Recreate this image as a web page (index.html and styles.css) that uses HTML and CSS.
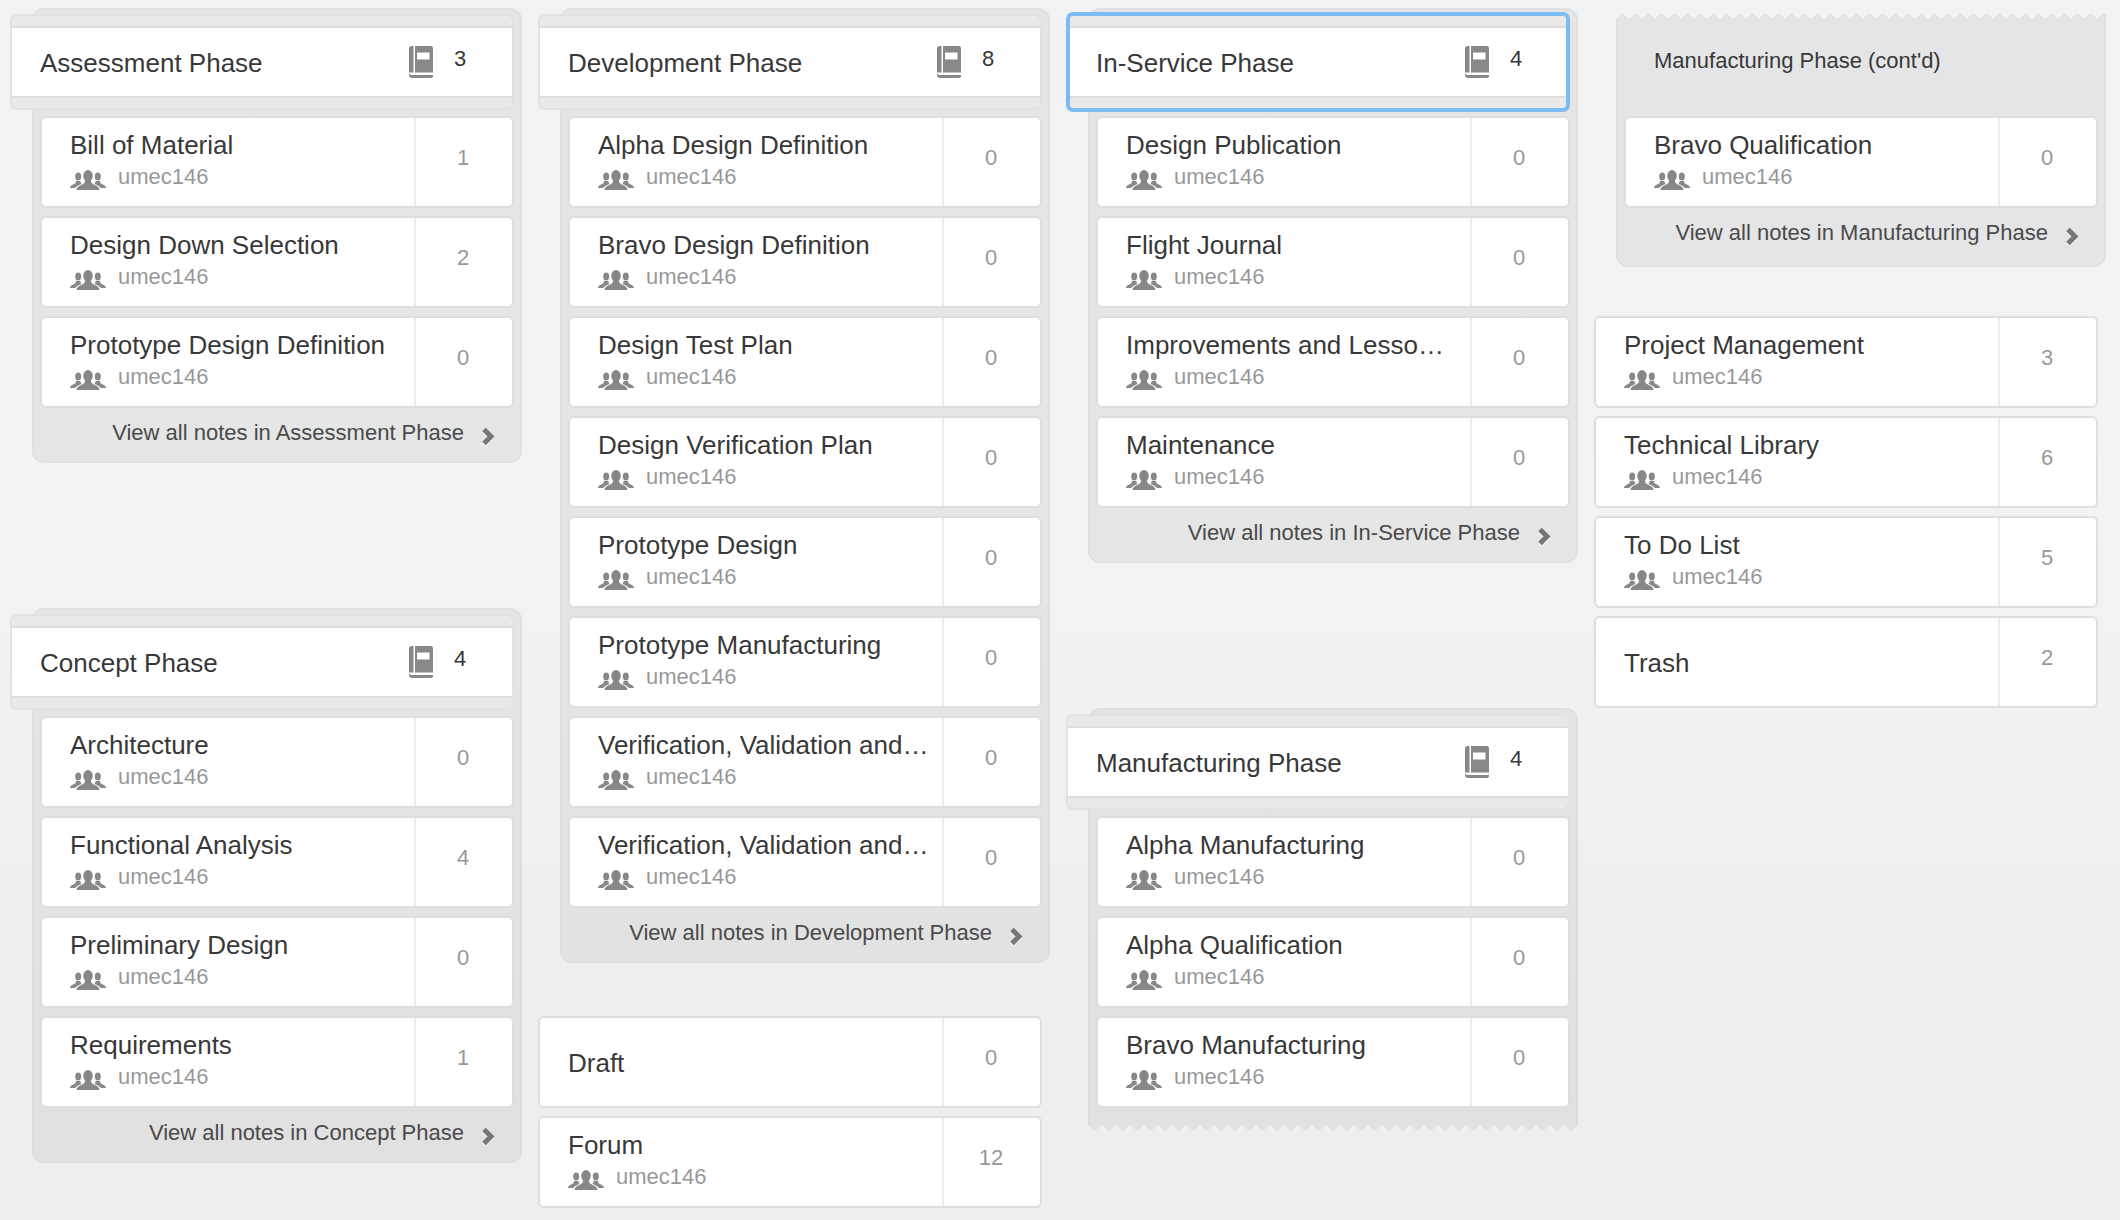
FILE: index.html
```html
<!DOCTYPE html>
<html lang="en">
<head>
<meta charset="utf-8">
<title>Notebooks</title>
<link rel="stylesheet" href="styles.css">
</head>
<body>
<svg class="sprite" aria-hidden="true">
  <symbol id="i-users" viewBox="0 0 36 20">
    <ellipse cx="8.200" cy="6.500" rx="3" ry="4"/>
    <path d="M0 18c0-2.800 3.800-3.600 5.800-5v-2h4.800v2l1.200.7c-2.800 1.400-5.600 2.300-6.600 4.300z"/>
    <ellipse cx="27.800" cy="6.500" rx="3" ry="4"/>
    <path d="M36 18c0-2.800-3.800-3.600-5.800-5v-2h-4.800v2l-1.200.7c2.800 1.400 5.600 2.300 6.600 4.300z"/>
    <ellipse cx="18" cy="5.800" rx="4.800" ry="5.800"/>
    <path d="M6.500 20c0-4 6-5 8.300-7.500v-2h6.400v2c2.300 2.500 8.300 3.500 8.300 7.500z"/>
  </symbol>
  <symbol id="i-book" viewBox="0 0 24 32">
    <path d="M0 2.500A2.500 2.500 0 0 1 2.500 0H4.500V26.500H0z"/>
    <path d="M6 0h15.500A2.500 2.500 0 0 1 24 2.500V26.500H6zM8 6.500V13.500H20.500V6.500z" fill-rule="evenodd"/>
    <path d="M0 26.500c0 1.400 1 2.500 2.500 2.500H24v1c0 1.200-.8 2-2 2H3c-1.800 0-3-1.200-3-3z"/>
  </symbol>
  <symbol id="i-chevron" viewBox="0 0 13 19">
    <path d="M2 2.500 9 9.500 2 16.500" fill="none" stroke="currentColor" stroke-width="5"/>
  </symbol>
</svg>

<main class="board">

  <section class="column">
    <div class="stack">
      <header class="stack-head">
        <div class="stack-head-inner">
          <h2 class="stack-title">Assessment Phase</h2>
          <svg class="icon-book"><use href="#i-book"/></svg>
          <span class="stack-count">3</span>
        </div>
      </header>
      <a class="row"><div class="row-main"><div class="row-title">Bill of Material</div><div class="row-owner"><svg class="icon-users"><use href="#i-users"/></svg>umec146</div></div><div class="row-count">1</div></a>
      <a class="row"><div class="row-main"><div class="row-title">Design Down Selection</div><div class="row-owner"><svg class="icon-users"><use href="#i-users"/></svg>umec146</div></div><div class="row-count">2</div></a>
      <a class="row"><div class="row-main"><div class="row-title">Prototype Design Definition</div><div class="row-owner"><svg class="icon-users"><use href="#i-users"/></svg>umec146</div></div><div class="row-count">0</div></a>
      <a class="stack-foot">View all notes in Assessment Phase<svg class="icon-chevron"><use href="#i-chevron"/></svg></a>
    </div>

    <div class="stack stack-spaced">
      <header class="stack-head">
        <div class="stack-head-inner">
          <h2 class="stack-title">Concept Phase</h2>
          <svg class="icon-book"><use href="#i-book"/></svg>
          <span class="stack-count">4</span>
        </div>
      </header>
      <a class="row"><div class="row-main"><div class="row-title">Architecture</div><div class="row-owner"><svg class="icon-users"><use href="#i-users"/></svg>umec146</div></div><div class="row-count">0</div></a>
      <a class="row"><div class="row-main"><div class="row-title">Functional Analysis</div><div class="row-owner"><svg class="icon-users"><use href="#i-users"/></svg>umec146</div></div><div class="row-count">4</div></a>
      <a class="row"><div class="row-main"><div class="row-title">Preliminary Design</div><div class="row-owner"><svg class="icon-users"><use href="#i-users"/></svg>umec146</div></div><div class="row-count">0</div></a>
      <a class="row"><div class="row-main"><div class="row-title">Requirements</div><div class="row-owner"><svg class="icon-users"><use href="#i-users"/></svg>umec146</div></div><div class="row-count">1</div></a>
      <a class="stack-foot">View all notes in Concept Phase<svg class="icon-chevron"><use href="#i-chevron"/></svg></a>
    </div>
  </section>

  <section class="column">
    <div class="stack">
      <header class="stack-head">
        <div class="stack-head-inner">
          <h2 class="stack-title">Development Phase</h2>
          <svg class="icon-book"><use href="#i-book"/></svg>
          <span class="stack-count">8</span>
        </div>
      </header>
      <a class="row"><div class="row-main"><div class="row-title">Alpha Design Definition</div><div class="row-owner"><svg class="icon-users"><use href="#i-users"/></svg>umec146</div></div><div class="row-count">0</div></a>
      <a class="row"><div class="row-main"><div class="row-title">Bravo Design Definition</div><div class="row-owner"><svg class="icon-users"><use href="#i-users"/></svg>umec146</div></div><div class="row-count">0</div></a>
      <a class="row"><div class="row-main"><div class="row-title">Design Test Plan</div><div class="row-owner"><svg class="icon-users"><use href="#i-users"/></svg>umec146</div></div><div class="row-count">0</div></a>
      <a class="row"><div class="row-main"><div class="row-title">Design Verification Plan</div><div class="row-owner"><svg class="icon-users"><use href="#i-users"/></svg>umec146</div></div><div class="row-count">0</div></a>
      <a class="row"><div class="row-main"><div class="row-title">Prototype Design</div><div class="row-owner"><svg class="icon-users"><use href="#i-users"/></svg>umec146</div></div><div class="row-count">0</div></a>
      <a class="row"><div class="row-main"><div class="row-title">Prototype Manufacturing</div><div class="row-owner"><svg class="icon-users"><use href="#i-users"/></svg>umec146</div></div><div class="row-count">0</div></a>
      <a class="row"><div class="row-main"><div class="row-title">Verification, Validation and…</div><div class="row-owner"><svg class="icon-users"><use href="#i-users"/></svg>umec146</div></div><div class="row-count">0</div></a>
      <a class="row"><div class="row-main"><div class="row-title">Verification, Validation and…</div><div class="row-owner"><svg class="icon-users"><use href="#i-users"/></svg>umec146</div></div><div class="row-count">0</div></a>
      <a class="stack-foot">View all notes in Development Phase<svg class="icon-chevron"><use href="#i-chevron"/></svg></a>
    </div>
    <div class="loose loose-after-long">
      <a class="row row-plain"><div class="row-main"><div class="row-title">Draft</div></div><div class="row-count">0</div></a>
      <a class="row"><div class="row-main"><div class="row-title">Forum</div><div class="row-owner"><svg class="icon-users"><use href="#i-users"/></svg>umec146</div></div><div class="row-count">12</div></a>
    </div>
  </section>

  <section class="column">
    <div class="stack">
      <header class="stack-head stack-head-focus">
        <div class="stack-head-inner">
          <h2 class="stack-title">In-Service Phase</h2>
          <svg class="icon-book"><use href="#i-book"/></svg>
          <span class="stack-count">4</span>
        </div>
      </header>
      <a class="row"><div class="row-main"><div class="row-title">Design Publication</div><div class="row-owner"><svg class="icon-users"><use href="#i-users"/></svg>umec146</div></div><div class="row-count">0</div></a>
      <a class="row"><div class="row-main"><div class="row-title">Flight Journal</div><div class="row-owner"><svg class="icon-users"><use href="#i-users"/></svg>umec146</div></div><div class="row-count">0</div></a>
      <a class="row"><div class="row-main"><div class="row-title">Improvements and Lesso…</div><div class="row-owner"><svg class="icon-users"><use href="#i-users"/></svg>umec146</div></div><div class="row-count">0</div></a>
      <a class="row"><div class="row-main"><div class="row-title">Maintenance</div><div class="row-owner"><svg class="icon-users"><use href="#i-users"/></svg>umec146</div></div><div class="row-count">0</div></a>
      <a class="stack-foot">View all notes in In-Service Phase<svg class="icon-chevron"><use href="#i-chevron"/></svg></a>
    </div>

    <div class="stack stack-spaced stack-torn-bottom">
      <header class="stack-head">
        <div class="stack-head-inner">
          <h2 class="stack-title">Manufacturing Phase</h2>
          <svg class="icon-book"><use href="#i-book"/></svg>
          <span class="stack-count">4</span>
        </div>
      </header>
      <a class="row"><div class="row-main"><div class="row-title">Alpha Manufacturing</div><div class="row-owner"><svg class="icon-users"><use href="#i-users"/></svg>umec146</div></div><div class="row-count">0</div></a>
      <a class="row"><div class="row-main"><div class="row-title">Alpha Qualification</div><div class="row-owner"><svg class="icon-users"><use href="#i-users"/></svg>umec146</div></div><div class="row-count">0</div></a>
      <a class="row"><div class="row-main"><div class="row-title">Bravo Manufacturing</div><div class="row-owner"><svg class="icon-users"><use href="#i-users"/></svg>umec146</div></div><div class="row-count">0</div></a>
    </div>
  </section>

  <section class="column">
    <div class="stack stack-torn-top">
      <div class="stack-cont">Manufacturing Phase (cont'd)</div>
      <a class="row"><div class="row-main"><div class="row-title">Bravo Qualification</div><div class="row-owner"><svg class="icon-users"><use href="#i-users"/></svg>umec146</div></div><div class="row-count">0</div></a>
      <a class="stack-foot stack-foot-tall">View all notes in Manufacturing Phase<svg class="icon-chevron"><use href="#i-chevron"/></svg></a>
    </div>
    <div class="loose loose-after-short">
      <a class="row"><div class="row-main"><div class="row-title">Project Management</div><div class="row-owner"><svg class="icon-users"><use href="#i-users"/></svg>umec146</div></div><div class="row-count">3</div></a>
      <a class="row"><div class="row-main"><div class="row-title">Technical Library</div><div class="row-owner"><svg class="icon-users"><use href="#i-users"/></svg>umec146</div></div><div class="row-count">6</div></a>
      <a class="row"><div class="row-main"><div class="row-title">To Do List</div><div class="row-owner"><svg class="icon-users"><use href="#i-users"/></svg>umec146</div></div><div class="row-count">5</div></a>
      <a class="row row-plain"><div class="row-main"><div class="row-title">Trash</div></div><div class="row-count">2</div></a>
    </div>
  </section>

</main>
</body>
</html>
```

FILE: styles.css
```css
* {
  box-sizing: border-box;
}

html,
body {
  margin: 0;
  height: 100%;
}

body {
  overflow: hidden;
  font-family: "Liberation Sans", Arial, sans-serif;
  color: #383838;
  background: linear-gradient(to bottom, #f1f2f4 0, #f2f3f3 40%, #eeeeee 85%);
}

.sprite {
  display: none;
}

.board {
  display: flex;
  gap: 24px;
  padding: 8px 10px 0;
}

.column {
  display: flex;
  flex-direction: column;
  flex: 0 0 504px;
  width: 504px;
}

/* stack panel */
.stack {
  position: relative;
  margin: 0 -8px 0 22px;
  padding-top: 4px;
  border: 2px solid rgba(0, 0, 0, .025);
  border-radius: 12px;
  background: rgba(0, 0, 0, .05);
}

.stack-spaced {
  margin-top: 145px;
}

.stack-torn-bottom {
  padding-bottom: 15px;
  border-bottom: 0;
  border-radius: 12px 12px 0 0;
}

.stack-torn-bottom::after {
  content: "";
  position: absolute;
  left: -2px;
  right: -2px;
  bottom: 0;
  height: 7px;
  background:
    linear-gradient(45deg, #eeeeee 25%, transparent 25%) 0 100% / 14px 14px,
    linear-gradient(315deg, #eeeeee 25%, transparent 25%) 0 100% / 14px 14px;
}

.stack-torn-top {
  margin-top: 5px;
  padding-top: 0;
  border-top: 0;
  border-radius: 0 0 12px 12px;
}

.stack-torn-top::before {
  content: "";
  position: absolute;
  left: -2px;
  right: -2px;
  top: 0;
  height: 6px;
  background:
    linear-gradient(135deg, #f2f3f3 25%, transparent 25%) 0 0 / 13px 13px,
    linear-gradient(225deg, #f2f3f3 25%, transparent 25%) 0 0 / 13px 13px;
  filter: drop-shadow(0 1.5px 0 #dddedf);
}

/* stack header */
.stack-head {
  margin: 0 6px 6px -24px;
  padding: 10px 0;
  border: 2px solid #e1e2e3;
  border-radius: 7px;
  background: #e9e9ea;
}

.stack-head-focus {
  margin-top: -2px;
  margin-bottom: 4px;
  border: 4px solid #7cbcf2;
}

.stack-head-inner {
  display: flex;
  align-items: flex-start;
  height: 72px;
  padding-left: 28px;
  border-top: 2px solid #dcdddd;
  border-bottom: 2px solid #dcdddd;
  background: #fff;
}

.stack-head-focus .stack-head-inner {
  padding-left: 26px;
}

.stack-title {
  flex: 1 1 auto;
  margin: 20px 0 0;
  font-size: 26px;
  font-weight: 400;
  line-height: 30px;
}

.icon-book {
  flex: none;
  width: 24px;
  height: 32px;
  margin-top: 18px;
  fill: #888;
}

.stack-count {
  flex: none;
  width: 79px;
  margin-top: 17px;
  padding-left: 21px;
  font-size: 22px;
  line-height: 28px;
}

.stack-head-focus .stack-count {
  width: 77px;
}

.stack-cont {
  height: 103px;
  padding: 35px 0 0 36px;
  font-size: 22px;
  line-height: 26px;
}

/* note rows */
.row {
  display: flex;
  height: 92px;
  margin-bottom: 8px;
  border: 2px solid #dddede;
  border-radius: 6px;
  background: #fff;
}

.stack .row {
  margin-left: 6px;
  margin-right: 6px;
}

.row-main {
  flex: 1 1 auto;
  min-width: 0;
  padding: 12px 0 0 28px;
}

.row-title {
  font-size: 26px;
  line-height: 30px;
  white-space: nowrap;
}

.row-plain .row-main {
  padding-top: 30px;
}

.row-owner {
  display: flex;
  align-items: flex-start;
  margin-top: 4px;
  font-size: 22px;
  line-height: 26px;
  color: #999;
}

.icon-users {
  flex: none;
  width: 36px;
  height: 20px;
  margin: 6px 12px 0 0;
  fill: #888;
}

.row-count {
  flex: 0 0 98px;
  padding: 26px 2px 0 0;
  border-left: 2px solid #ececec;
  font-size: 22px;
  line-height: 28px;
  text-align: center;
  color: #999;
}

/* stack footer */
.stack-foot {
  display: flex;
  justify-content: flex-end;
  align-items: flex-start;
  height: 45px;
  padding: 0 25px 0 0;
  font-size: 22px;
  line-height: 34px;
  color: #4a4a4a;
}

.stack-foot-tall {
  height: 49px;
}

.icon-chevron {
  flex: none;
  width: 13px;
  height: 19px;
  margin: 11px 0 0 18px;
  color: #777;
  filter: drop-shadow(0 1px 0 #fff);
}

/* rows outside any stack */
.loose-after-long {
  margin-top: 53px;
}

.loose-after-short {
  margin-top: 49px;
}
```
